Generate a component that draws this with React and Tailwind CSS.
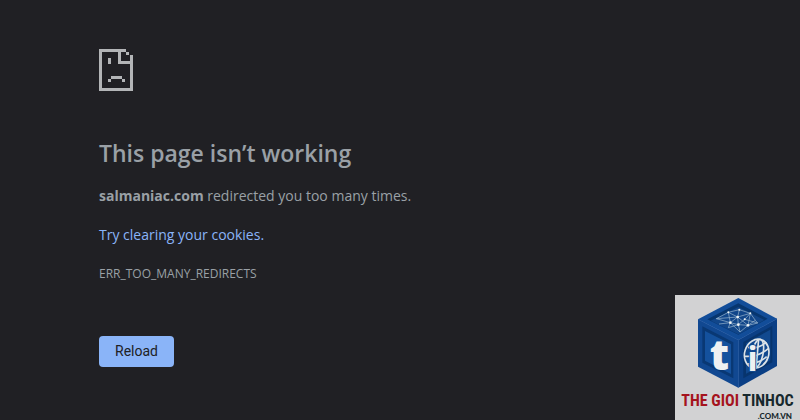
function SadPageIcon() {
  return (
    <svg width="34" height="42" viewBox="0 0 34 42" fill="#b3b5b7" shapeRendering="crispEdges" aria-hidden="true">
      <path d="M0 0h27v3h3v3h4v36H0zM3 3v36h28V15H19V3zM22 3v9h9V6h-4V3z" fillRule="evenodd" />
      <path d="M9 9h3v6H9zM12 27h11v3H12zM9 30h3v3H9zM23 30h3v3h-3z" />
    </svg>
  )
}

function CubeLogo() {
  return (
    <svg className="block w-full" viewBox="0 0 375 285" aria-hidden="true">
      <path d="M190 9 306 71 190 135 69 73z" fill="#124d99" />
      <path d="M69 73 190 135v143L69 215z" fill="#114891" />
      <path d="M306 71 190 135v143l116-65z" fill="#0b3f85" />
      <path d="M190 25 278 71 190 119 97 73z" fill="#07366f" />
      <path d="M190 36 268 75 190 118 107 77z" fill="#11468a" />
      <path d="M82 94 175 142v108L82 203z" fill="#093874" />
      <path d="M90 108 168 148v89L90 197z" fill="#14519d" />
      <path d="M292 92 205 141v109l87-48z" fill="#07346d" />
      <path d="M286 104 213 145v91l73-40z" fill="#11498f" />
      <path d="M69 73 190 135 306 71M190 135v143" fill="none" stroke="#1650a0" strokeWidth="2" />

      <g fill="none" stroke="#9fb9d0" strokeWidth="2">
        <path d="M124 71 160 52 193 44 226 55 241 76 248 84 219 91 195 111 190 89 166 83 124 71" />
        <path d="M132 87 166 83 160 52 188 66 193 44M166 83 188 66 226 55 219 91 188 66 190 89 219 91" />
        <path d="M160 98 166 83 195 111M190 89 160 98M241 76 219 91M226 55 209 73 190 89M124 71 188 66M248 84 209 73" />
      </g>
      <g fill="#f0f4f5">
        <circle cx="160" cy="52" r="3" />
        <circle cx="193" cy="44" r="3" />
        <circle cx="188" cy="66" r="4" />
        <circle cx="226" cy="55" r="3" />
        <circle cx="166" cy="83" r="4" />
        <circle cx="190" cy="89" r="4" />
        <circle cx="219" cy="91" r="4" />
        <circle cx="209" cy="73" r="3" />
      </g>

      <g fill="none" stroke="#dce3e8" strokeWidth="5">
        <ellipse cx="245" cy="176" rx="36" ry="44" transform="rotate(18 245 176)" />
        <ellipse cx="247" cy="176" rx="17" ry="44" transform="rotate(12 247 176)" />
        <path d="M251 132 243 220M219 157c20 4 40-2 55-16M209 184c24 2 50-6 72-24M217 207c20 0 42-8 58-22" />
      </g>
      <g fill="#eef1f2" fontFamily="'Open Sans', sans-serif">
        <text x="104" y="225" fontSize="126" fontWeight="800">t</text>
        <text x="217" y="227" fontSize="104" fontWeight="700" stroke="#11498f" strokeWidth="6" paintOrder="stroke">i</text>
      </g>
    </svg>
  )
}

function Watermark() {
  return (
    <aside className="absolute right-0 bottom-0 w-[125px] bg-[#d2d2d3]">
      <CubeLogo />
      <p className="text-center whitespace-nowrap font-['Roboto_Condensed','Liberation_Sans_Narrow',sans-serif] font-bold text-[16px] leading-[22px] text-[#a5131d]">
        THE GIOI <span className="text-[#17282d]">TINHOC</span>
      </p>
      <p className="pr-2 text-right font-['Lato',sans-serif] font-black text-[8px] leading-2 text-[#17282d]">.COM.VN</p>
    </aside>
  )
}

export default function App() {
  return (
    <div className="relative min-h-screen bg-[#202024] font-['Open_Sans','Noto_Sans',sans-serif] text-[#9aa0a6]">
      <main className="px-[99px] pt-[49px] pb-12">
        <SadPageIcon />
        <h1 className="mt-12 text-[23px] leading-7 font-semibold">This page isn’t working</h1>
        <p className="mt-[17px] text-[14px] leading-6">
          <strong className="font-bold">salmaniac.com</strong> redirected you too many times.
        </p>
        <p className="mt-[15px] text-[14px] leading-6">
          <a href="#cookies" className="text-[#8ab4f8]">Try clearing your cookies.</a>
        </p>
        <p className="mt-[15px] text-[12px] leading-6">ERR_TOO_MANY_REDIRECTS</p>
        <button
          type="button"
          className="mt-[50px] h-[31px] px-4 rounded-sm bg-[#8ab4f8] font-['Roboto',sans-serif] text-[14px] text-[#202124]"
        >
          Reload
        </button>
      </main>
      <Watermark />
    </div>
  )
}
